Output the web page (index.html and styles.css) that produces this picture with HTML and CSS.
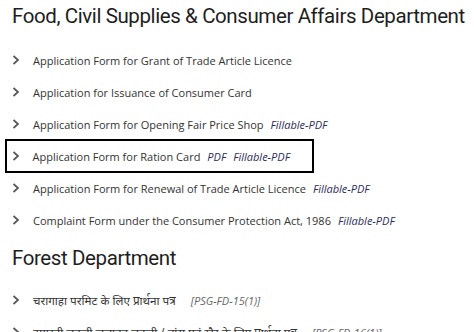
FILE: index.html
```html
<!DOCTYPE html>
<html>
<head>
<meta charset="utf-8">
<link rel="stylesheet" href="styles.css">
</head>
<body>
<div class="page">
  <h2 class="dept">Food, Civil Supplies &amp; Consumer Affairs Department</h2>
  <ul class="forms">
    <li class="item"><svg class="chev" viewBox="0 0 8 10"><path d="M1.5 1 L6 5 L1.5 9" fill="none" stroke="#5a5a5a" stroke-width="1.8"/></svg><span class="label">Application Form for Grant of Trade Article Licence</span></li>
    <li class="item"><svg class="chev" viewBox="0 0 8 10"><path d="M1.5 1 L6 5 L1.5 9" fill="none" stroke="#5a5a5a" stroke-width="1.8"/></svg><span class="label">Application for Issuance of Consumer Card</span></li>
    <li class="item"><svg class="chev" viewBox="0 0 8 10"><path d="M1.5 1 L6 5 L1.5 9" fill="none" stroke="#5a5a5a" stroke-width="1.8"/></svg><span class="label">Application Form for Opening Fair Price Shop</span><a class="link">Fillable-PDF</a></li>
    <li class="item boxed"><svg class="chev" viewBox="0 0 8 10"><path d="M1.5 1 L6 5 L1.5 9" fill="none" stroke="#5a5a5a" stroke-width="1.8"/></svg><span class="label">Application Form for Ration Card</span><a class="link">PDF</a><a class="link">Fillable-PDF</a></li>
    <li class="item"><svg class="chev" viewBox="0 0 8 10"><path d="M1.5 1 L6 5 L1.5 9" fill="none" stroke="#5a5a5a" stroke-width="1.8"/></svg><span class="label">Application Form for Renewal of Trade Article Licence</span><a class="link">Fillable-PDF</a></li>
    <li class="item"><svg class="chev" viewBox="0 0 8 10"><path d="M1.5 1 L6 5 L1.5 9" fill="none" stroke="#5a5a5a" stroke-width="1.8"/></svg><span class="label">Complaint Form under the Consumer Protection Act, 1986</span><a class="link">Fillable-PDF</a></li>
  </ul>
  <h2 class="dept second">Forest Department</h2>
  <ul class="forms forest">
    <li class="item"><svg class="chev" viewBox="0 0 8 10"><path d="M1.5 1 L6 5 L1.5 9" fill="none" stroke="#5a5a5a" stroke-width="1.8"/></svg><span class="label hi">चरागाहा परमिट के लिए प्रार्थना पत्र</span><span class="code">[PSG-FD-15(1)]</span></li>
    <li class="item"><svg class="chev" viewBox="0 0 8 10"><path d="M1.5 1 L6 5 L1.5 9" fill="none" stroke="#5a5a5a" stroke-width="1.8"/></svg><span class="label hi">इमारती लकड़ी जलावन लकड़ी / बांस एवं खैर के लिए प्रार्थना पत्र</span><span class="code">[PSG-FD-16(1)]</span></li>
  </ul>
</div>
</body>
</html>
```
FILE: styles.css
```css
html, body {
  margin: 0;
  padding: 0;
  background: #ffffff;
}
.page {
  padding: 0 0 0 12px;
  height: 332px;
  overflow: hidden;
}
.dept {
  margin: 0;
  font-family: Roboto, "Liberation Sans", sans-serif;
  font-weight: 400;
  font-size: 20.5px;
  line-height: 32px;
  color: #1e1e1e;
  letter-spacing: -0.4px;
  white-space: nowrap;
}
.dept.second {
  margin-top: 6px;
}
.forms {
  list-style: none;
  margin: 12px 0 0 0;
  padding: 0;
}
.forms.forest {
  margin-top: 10px;
}
.item {
  display: flex;
  align-items: center;
  height: 32px;
  font-family: "Open Sans", "Noto Sans", sans-serif;
  font-size: 11px;
  color: #333333;
  white-space: nowrap;
}
.chev {
  width: 8px;
  height: 10px;
  margin-right: 13px;
  flex: none;
}
.label {
  margin-right: 7px;
}
.label.hi {
  font-size: 11.7px;
}
.link {
  font-style: italic;
  color: #2d2b5c;
  margin-right: 7px;
}
.code {
  font-style: italic;
  color: #666666;
  margin-left: 8px;
}
.boxed {
  box-sizing: border-box;
  margin-left: -7px;
  padding-left: 4.5px;
  width: 309px;
  height: 34px;
  border: 2.5px solid #000000;
  margin-top: -1px;
  margin-bottom: -1px;
}
```
